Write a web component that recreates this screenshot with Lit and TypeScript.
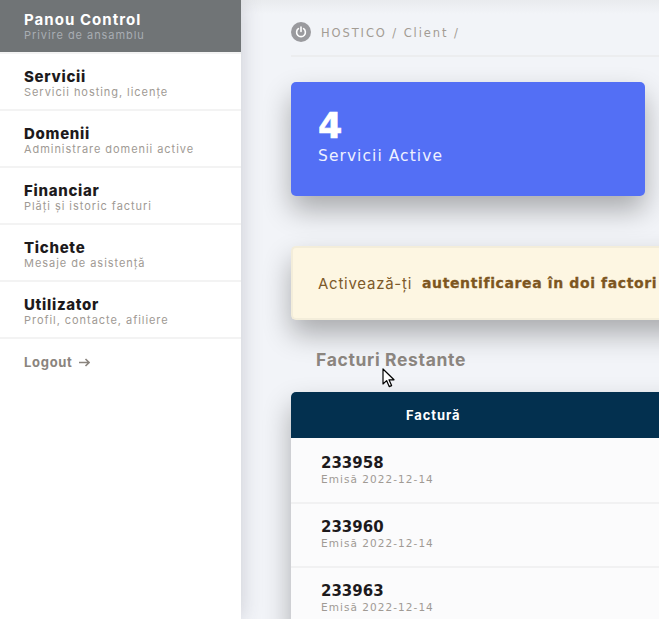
import { LitElement, html, css } from "lit";
import { customElement } from "lit/decorators.js";

const MENU = [
  ["Servicii", "Servicii hosting, licențe"],
  ["Domenii", "Administrare domenii active"],
  ["Financiar", "Plăți și istoric facturi"],
  ["Tichete", "Mesaje de asistență"],
  ["Utilizator", "Profil, contacte, afiliere"],
];
const ROWS = ["233958", "233960", "233963"];

@customElement("app-root")
export class AppRoot extends LitElement {
  static styles = css`
    :host { display: block; width: 659px; height: 619px; overflow: hidden; font-family: "Inter", "DejaVu Sans", sans-serif; position: relative; background: #f2f4f8; }
    * { box-sizing: border-box; }
    .page { display: flex; height: 619px; }
    .side { width: 241px; flex: none; background: #fff; box-shadow: 0 0 20px rgba(60,60,80,.22); position: relative; z-index: 2; }
    .item { height: 57px; padding: 14px 24px 0; border-bottom: 2px solid #f3f3f3; }
    .item.active { height: 54px; padding-top: 11px; background: #707476; background-clip: padding-box; }
    .title { font-size: 15px; line-height: 18px; font-weight: 800; letter-spacing: .7px; color: #1d1a1c; }
    .sub { font-size: 11px; line-height: 13px; letter-spacing: .95px; color: #a09a94; }
    .active .title { color: #fff; letter-spacing: 1.05px; font-weight: 700; }
    .active .sub { color: #a8adb3; }
    .logout { padding: 14px 24px; font-size: 13px; line-height: 18px; font-weight: 700; letter-spacing: .7px; color: #8a847e; display: flex; gap: 6px; align-items: center; }
    .main { flex: 1; min-width: 0; padding: 0 0 0 50px; background: linear-gradient(#e9ebee, #f2f4f8 14px); }
    .crumb { height: 57px; border-bottom: 2px solid #ecedef; display: flex; align-items: center; gap: 10px; padding-top: 9px; margin-bottom: 25px; }
    .power { width: 20px; height: 20px; border-radius: 50%; background: #9a9a9e; flex: none; display: flex; align-items: center; justify-content: center; }
    .path { font-family: "DejaVu Sans", sans-serif; font-size: 11.5px; letter-spacing: 1.9px; color: #a39c94; padding-top: 2px; }
    .card { width: 354px; height: 114px; background: #536ff5; border-radius: 5px; box-shadow: 0 14px 28px rgba(0,0,0,.3); padding: 29px 27px 0; color: #fff; margin-bottom: 50px; }
    .num { font-family: "DejaVu Sans", sans-serif; font-weight: 700; font-size: 35px; line-height: 31px; -webkit-text-stroke: .6px #fff; }
    .label { font-family: "DejaVu Sans", sans-serif; font-size: 15.5px; line-height: 18px; letter-spacing: 1.05px; margin-top: 5px; color: #eef1ff; }
    .alert { width: 500px; height: 74px; background: #fdf6e2; border: 2px solid #f3edda; border-right: 0; border-radius: 5px; box-shadow: 0 14px 28px rgba(0,0,0,.3); padding-left: 25px; display: flex; align-items: center; font-size: 15px; letter-spacing: .75px; color: #7d5a2a; white-space: pre; }
    .alert b { font-family: "DejaVu Sans", sans-serif; font-size: 14px; letter-spacing: .62px; color: #7d561f; margin-left: 5px; -webkit-text-stroke: .3px #7d561f; }
    h2 { margin: 29px 0 21px 25px; font-size: 17.5px; line-height: 22px; font-weight: 700; letter-spacing: .65px; color: #8b857f; }
    .table { width: 500px; border-radius: 5px 5px 0 0; background: #fbfbfc; box-shadow: 0 14px 28px rgba(0,0,0,.3); }
    .thead { height: 48px; background: #fbfbfc; border-radius: 5px 5px 0 0; color: #fff; font-size: 13px; font-weight: 700; letter-spacing: .9px; }
    .thead div { height: 46px; background: #03304f; border-radius: 5px 5px 0 0; display: flex; align-items: center; padding-left: 115px; }
    .row { height: 64px; border-bottom: 2px solid #f1f1f2; padding: 14px 30px 0; }
    .id { font-family: "DejaVu Sans", sans-serif; font-weight: 700; font-size: 15px; line-height: 19px; color: #1d1a1c; }
    .date { font-family: "DejaVu Sans", sans-serif; font-size: 10.5px; line-height: 13px; letter-spacing: 1.05px; color: #a09a94; }
    .cursor { position: absolute; left: 382px; top: 368px; width: 14px; height: 20px; z-index: 5; }
  `;

  render() {
    return html`<div class="page">
      <nav class="side">
        <div class="item active"><div class="title">Panou Control</div><div class="sub">Privire de ansamblu</div></div>
        ${MENU.map(([t, s]) => html`<div class="item"><div class="title">${t}</div><div class="sub">${s}</div></div>`)}
        <div class="logout">Logout <svg width="11" height="9" viewBox="0 0 11 9" fill="none" stroke="#8a847e" stroke-width="1.6"><path d="M0 4.5h9.5M6.5 1l3.5 3.5L6.5 8"/></svg></div>
      </nav>
      <main class="main">
        <div class="crumb">
          <span class="power"><svg width="12" height="12" viewBox="0 0 12 12" fill="none" stroke="#fff" stroke-width="1.6" stroke-linecap="round"><path d="M6 1v4.5M3.4 2.7a4.4 4.4 0 1 0 5.2 0"/></svg></span>
          <span class="path">HOSTICO / Client /</span>
        </div>
        <div class="card"><div class="num">4</div><div class="label">Servicii Active</div></div>
        <div class="alert">Activează-ți <b>autentificarea în doi factori</b></div>
        <h2>Facturi Restante</h2>
        <div class="table">
          <div class="thead"><div>Factură</div></div>
          ${ROWS.map((r) => html`<div class="row"><div class="id">${r}</div><div class="date">Emisă 2022-12-14</div></div>`)}
        </div>
      </main>
    </div>
    <svg class="cursor" viewBox="0 0 14 20"><path d="M1 1v15l3.6-3.4 2.6 6 2.4-1-2.6-5.8H12z" fill="#fff" stroke="#000" stroke-width="1.2" stroke-linejoin="round"/></svg>`;
  }
}
